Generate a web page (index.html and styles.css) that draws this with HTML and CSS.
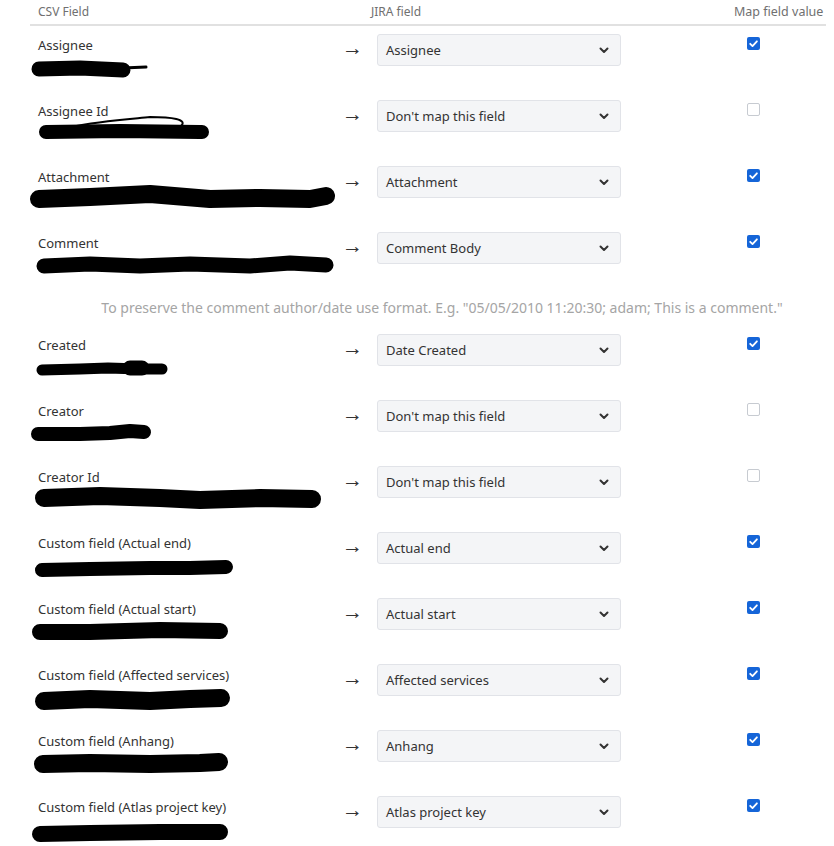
FILE: index.html
```html
<!DOCTYPE html>
<html lang="en">
<head>
    <meta charset="UTF-8">
    <title>CSV field mapping</title>
    <link rel="stylesheet" href="styles.css">
</head>
<body>
    <div class="mapping">
        <div class="row head">
            <div class="col-csv">CSV Field</div>
            <div class="col-arrow"></div>
            <div class="col-jira">JIRA field</div>
            <div class="col-map">Map field value</div>
        </div>

        <div class="row">
            <div class="col-csv">
                <div class="name">Assignee</div>
                <svg class="redact" width="320" height="34"><polyline points="9,16 50,15 93,17" stroke-width="15"/><polyline points="93,15 116,14" stroke-width="3"/></svg>
            </div>
            <div class="col-arrow">&rarr;</div>
            <div class="col-jira"><div class="select"><span>Assignee</span><svg class="chev" width="10" height="7"><path d="M1.5 1.5l3.5 3.5 3.5-3.5"/></svg></div></div>
            <div class="col-map"><span class="check on"><svg width="13" height="13"><path d="M3.2 6.8l2.3 2.3 4.4-4.8"/></svg></span></div>
        </div>

        <div class="row">
            <div class="col-csv">
                <div class="name">Assignee Id</div>
                <svg class="redact" width="320" height="34"><polyline points="16,13 90,12 170,13 172,13" stroke-width="14"/><path d="M40 8c30-6 60-8 80-10 20 0 40 2 30 10" stroke-width="2" fill="none"/></svg>
            </div>
            <div class="col-arrow">&rarr;</div>
            <div class="col-jira"><div class="select"><span>Don't map this field</span><svg class="chev" width="10" height="7"><path d="M1.5 1.5l3.5 3.5 3.5-3.5"/></svg></div></div>
            <div class="col-map"><span class="check"></span></div>
        </div>

        <div class="row">
            <div class="col-csv">
                <div class="name">Attachment</div>
                <svg class="redact" width="320" height="34"><polyline points="9,14 60,12 120,9 180,14 230,13 280,14 296,11" stroke-width="18"/></svg>
            </div>
            <div class="col-arrow">&rarr;</div>
            <div class="col-jira"><div class="select"><span>Attachment</span><svg class="chev" width="10" height="7"><path d="M1.5 1.5l3.5 3.5 3.5-3.5"/></svg></div></div>
            <div class="col-map"><span class="check on"><svg width="13" height="13"><path d="M3.2 6.8l2.3 2.3 4.4-4.8"/></svg></span></div>
        </div>

        <div class="row">
            <div class="col-csv">
                <div class="name">Comment</div>
                <svg class="redact" width="320" height="34"><polyline points="14,15 60,13 110,15 160,13 220,15 260,12 296,14" stroke-width="15"/></svg>
            </div>
            <div class="col-arrow">&rarr;</div>
            <div class="col-jira"><div class="select"><span>Comment Body</span><svg class="chev" width="10" height="7"><path d="M1.5 1.5l3.5 3.5 3.5-3.5"/></svg></div></div>
            <div class="col-map"><span class="check on"><svg width="13" height="13"><path d="M3.2 6.8l2.3 2.3 4.4-4.8"/></svg></span></div>
        </div>

        <div class="hint">To preserve the comment author/date use format. E.g. "05/05/2010 11:20:30; adam; This is a comment."</div>

        <div class="row">
            <div class="col-csv">
                <div class="name">Created</div>
                <svg class="redact" width="320" height="34"><polyline points="12,17 50,16 78,15 110,16 132,16" stroke-width="11"/><polyline points="100,15 112,15" stroke-width="15"/></svg>
            </div>
            <div class="col-arrow">&rarr;</div>
            <div class="col-jira"><div class="select"><span>Date Created</span><svg class="chev" width="10" height="7"><path d="M1.5 1.5l3.5 3.5 3.5-3.5"/></svg></div></div>
            <div class="col-map"><span class="check on"><svg width="13" height="13"><path d="M3.2 6.8l2.3 2.3 4.4-4.8"/></svg></span></div>
        </div>

        <div class="row">
            <div class="col-csv">
                <div class="name">Creator</div>
                <svg class="redact" width="320" height="34"><polyline points="8,15 50,15 80,14 100,12 114,13" stroke-width="14"/></svg>
            </div>
            <div class="col-arrow">&rarr;</div>
            <div class="col-jira"><div class="select"><span>Don't map this field</span><svg class="chev" width="10" height="7"><path d="M1.5 1.5l3.5 3.5 3.5-3.5"/></svg></div></div>
            <div class="col-map"><span class="check"></span></div>
        </div>

        <div class="row">
            <div class="col-csv">
                <div class="name">Creator Id</div>
                <svg class="redact" width="320" height="34"><polyline points="14,13 70,11 130,13 170,15 230,13 282,14" stroke-width="18"/></svg>
            </div>
            <div class="col-arrow">&rarr;</div>
            <div class="col-jira"><div class="select"><span>Don't map this field</span><svg class="chev" width="10" height="7"><path d="M1.5 1.5l3.5 3.5 3.5-3.5"/></svg></div></div>
            <div class="col-map"><span class="check"></span></div>
        </div>

        <div class="row">
            <div class="col-csv">
                <div class="name">Custom field (Actual end)</div>
                <svg class="redact" width="320" height="34"><polyline points="12,19 60,18 120,17 160,17 196,16" stroke-width="14"/></svg>
            </div>
            <div class="col-arrow">&rarr;</div>
            <div class="col-jira"><div class="select"><span>Actual end</span><svg class="chev" width="10" height="7"><path d="M1.5 1.5l3.5 3.5 3.5-3.5"/></svg></div></div>
            <div class="col-map"><span class="check on"><svg width="13" height="13"><path d="M3.2 6.8l2.3 2.3 4.4-4.8"/></svg></span></div>
        </div>

        <div class="row">
            <div class="col-csv">
                <div class="name">Custom field (Actual start)</div>
                <svg class="redact" width="320" height="34"><polyline points="10,15 60,15 130,13 190,14" stroke-width="16"/></svg>
            </div>
            <div class="col-arrow">&rarr;</div>
            <div class="col-jira"><div class="select"><span>Actual start</span><svg class="chev" width="10" height="7"><path d="M1.5 1.5l3.5 3.5 3.5-3.5"/></svg></div></div>
            <div class="col-map"><span class="check on"><svg width="13" height="13"><path d="M3.2 6.8l2.3 2.3 4.4-4.8"/></svg></span></div>
        </div>

        <div class="row">
            <div class="col-csv">
                <div class="name">Custom field (Affected services)</div>
                <svg class="redact" width="320" height="34"><polyline points="14,18 60,16 120,18 160,16 191,15" stroke-width="18"/></svg>
            </div>
            <div class="col-arrow">&rarr;</div>
            <div class="col-jira"><div class="select"><span>Affected services</span><svg class="chev" width="10" height="7"><path d="M1.5 1.5l3.5 3.5 3.5-3.5"/></svg></div></div>
            <div class="col-map"><span class="check on"><svg width="13" height="13"><path d="M3.2 6.8l2.3 2.3 4.4-4.8"/></svg></span></div>
        </div>

        <div class="row">
            <div class="col-csv">
                <div class="name">Custom field (Anhang)</div>
                <svg class="redact" width="320" height="34"><polyline points="13,15 60,14 120,15 170,14 189,13" stroke-width="18"/></svg>
            </div>
            <div class="col-arrow">&rarr;</div>
            <div class="col-jira"><div class="select"><span>Anhang</span><svg class="chev" width="10" height="7"><path d="M1.5 1.5l3.5 3.5 3.5-3.5"/></svg></div></div>
            <div class="col-map"><span class="check on"><svg width="13" height="13"><path d="M3.2 6.8l2.3 2.3 4.4-4.8"/></svg></span></div>
        </div>

        <div class="row">
            <div class="col-csv">
                <div class="name">Custom field (Atlas project key)</div>
                <svg class="redact" width="320" height="34"><polyline points="10,19 60,18 130,17 190,17" stroke-width="16"/></svg>
            </div>
            <div class="col-arrow">&rarr;</div>
            <div class="col-jira"><div class="select"><span>Atlas project key</span><svg class="chev" width="10" height="7"><path d="M1.5 1.5l3.5 3.5 3.5-3.5"/></svg></div></div>
            <div class="col-map"><span class="check on"><svg width="13" height="13"><path d="M3.2 6.8l2.3 2.3 4.4-4.8"/></svg></span></div>
        </div>
    </div>
</body>
</html>
```

FILE: styles.css
```css
body {
    margin: 0;
    background-color: #fff;
    font-family: "Noto Sans", Arial, sans-serif;
    color: #333;
}
.mapping {
    margin-left: 30px;
    width: 796px;
}
.row {
    display: grid;
    grid-template-columns: 305px 28px 371px 92px;
    height: 66px;
    box-sizing: border-box;
    padding-top: 8px;
}
.row > div {
    padding-left: 8px;
}
.row .col-arrow {
    padding-left: 0;
}
.head {
    height: 26px;
    padding-top: 0;
    border-bottom: 2px solid #e1e1e1;
    font-size: 12px;
    line-height: 24px;
    color: #707070;
}
.head .col-map {
    padding-left: 0;
    padding-right: 3px;
    text-align: right;
    white-space: nowrap;
    font-size: 12.5px;
}
.name {
    font-size: 13px;
    line-height: 20px;
    margin-top: 1px;
    color: #333;
}
.redact {
    display: block;
    margin-left: -8px;
    margin-top: -2px;
    overflow: visible;
}
.redact polyline,
.redact path {
    fill: none;
    stroke: #000;
    stroke-linecap: round;
    stroke-linejoin: round;
}
.col-arrow {
    font-size: 21px;
    line-height: 27px;
    color: #333;
    text-align: right;
    padding-right: 0;
}
.select {
    display: flex;
    align-items: center;
    justify-content: space-between;
    margin-left: 6px;
    width: 244px;
    height: 32px;
    box-sizing: border-box;
    padding: 0 11px 0 8px;
    background-color: #f4f5f7;
    border: 1px solid #e1e3e8;
    border-radius: 3px;
    font-size: 13px;
    color: #333;
}
.chev path {
    fill: none;
    stroke: #333;
    stroke-width: 2;
    stroke-linecap: round;
    stroke-linejoin: round;
}
.check {
    display: block;
    width: 13px;
    height: 13px;
    margin: 3px 0 0 5px;
    box-sizing: border-box;
    border: 1px solid #c7cbd1;
    border-radius: 2px;
    background-color: #fff;
}
.check.on {
    border: none;
    background-color: #1565d8;
}
.check svg {
    display: block;
}
.check path {
    fill: none;
    stroke: #fff;
    stroke-width: 1.8;
    stroke-linecap: round;
    stroke-linejoin: round;
}
.hint {
    height: 36px;
    line-height: 36px;
    padding-left: 28px;
    text-align: center;
    font-size: 14px;
    color: #a5a5a5;
}
```
